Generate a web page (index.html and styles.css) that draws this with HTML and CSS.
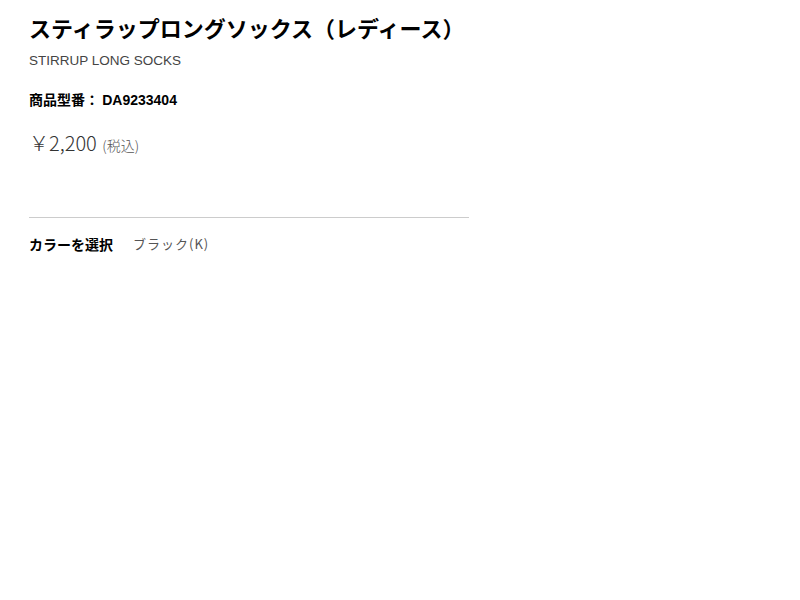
FILE: index.html
```html
<!DOCTYPE html>
<html lang="ja">
<head>
  <meta charset="utf-8">
  <title>スティラップロングソックス（レディース）</title>
  <link rel="stylesheet" href="styles.css">
</head>
<body>
  <div class="product">
    <h1 class="product-name">スティラップロングソックス（レディース）</h1>
    <p class="product-name-en">STIRRUP LONG SOCKS</p>
    <p class="product-code">商品型番： <span>DA9233404</span></p>
    <p class="price">￥2,200 <span class="tax">(税込)</span></p>

    <div class="color-select">
      <span class="color-label">カラーを選択</span>
      <span class="color-value">ブラック(K)</span>
    </div>
  </div>
</body>
</html>
```

FILE: styles.css
```css
body {
  margin: 0;
  font-family: "Noto Sans CJK JP", "Liberation Sans", sans-serif;
  color: #000;
  background: #fff;
}

.product {
  width: 440px;
  padding: 12px 0 0 29px;
}

.product-name {
  margin: 0;
  font-size: 22px;
  font-weight: bold;
  line-height: 30px;
}

.product-name-en {
  margin: 10px 0 0;
  font-family: "Liberation Sans", sans-serif;
  font-size: 13.5px;
  color: #444;
  line-height: 18px;
}

.product-code {
  margin: 20px 0 0;
  font-size: 14px;
  font-weight: bold;
  line-height: 18px;
}

.product-code span {
  font-family: "Liberation Sans", sans-serif;
}

.price {
  margin: 21px 0 0;
  font-size: 20px;
  font-weight: 300;
  color: #333;
  line-height: 26px;
}

.price .tax {
  margin-left: 1px;
  font-size: 14px;
  color: #555;
}

.color-select {
  margin-top: 59px;
  padding-top: 17px;
  border-top: 1px solid #ccc;
  font-size: 14px;
  line-height: 18px;
  display: flex;
  gap: 20px;
}

.color-label {
  font-weight: bold;
}

.color-value {
  font-size: 13px;
  color: #555;
  letter-spacing: 1px;
}
```
